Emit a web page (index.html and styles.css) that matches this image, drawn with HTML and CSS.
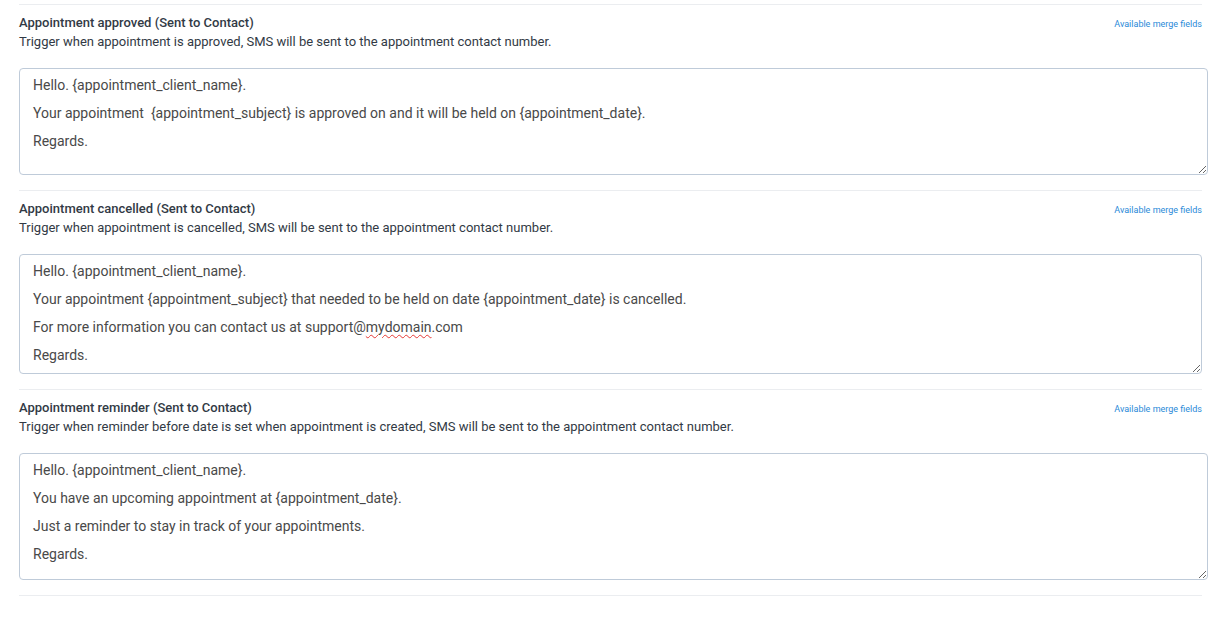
FILE: index.html
```html
<!DOCTYPE html>
<html lang="en">
<head>
    <meta charset="UTF-8">
    <meta name="viewport" content="width=device-width, initial-scale=1.0">
    <title>SMS Triggers</title>
    <link rel="stylesheet" href="styles.css">
</head>
<body>
    <div class="sms-triggers">
        <!-- appointment approved -->
        <hr class="divider">
        <div class="trigger-head">
            <div class="trigger-info">
                <div class="trigger-title">Appointment approved (Sent to Contact)</div>
                <div class="trigger-desc">Trigger when appointment is approved, SMS will be sent to the appointment contact number.</div>
            </div>
            <a class="merge-link" href="#">Available merge fields</a>
        </div>
        <div class="message-box box-approved">
            <p>Hello. {appointment_client_name}.</p>
            <p>Your appointment &nbsp;{appointment_subject} is approved on and it will be held on {appointment_date}.</p>
            <p>Regards.</p>
        </div>

        <!-- appointment cancelled -->
        <hr class="divider">
        <div class="trigger-head">
            <div class="trigger-info">
                <div class="trigger-title">Appointment cancelled (Sent to Contact)</div>
                <div class="trigger-desc">Trigger when appointment is cancelled, SMS will be sent to the appointment contact number.</div>
            </div>
            <a class="merge-link" href="#">Available merge fields</a>
        </div>
        <div class="message-box box-cancelled">
            <p>Hello. {appointment_client_name}.</p>
            <p>Your appointment {appointment_subject} that needed to be held on date {appointment_date} is cancelled.</p>
            <p>For more information you can contact us at support@<span class="misspelled">mydomain</span>.com</p>
            <p>Regards.</p>
        </div>

        <!-- appointment reminder -->
        <hr class="divider">
        <div class="trigger-head">
            <div class="trigger-info">
                <div class="trigger-title">Appointment reminder (Sent to Contact)</div>
                <div class="trigger-desc">Trigger when reminder before date is set when appointment is created, SMS will be sent to the appointment contact number.</div>
            </div>
            <a class="merge-link" href="#">Available merge fields</a>
        </div>
        <div class="message-box box-reminder">
            <p>Hello. {appointment_client_name}.</p>
            <p>You have an upcoming appointment at {appointment_date}.</p>
            <p>Just a reminder to stay in track of your appointments.</p>
            <p>Regards.</p>
        </div>
        <hr class="divider">
    </div>
</body>
</html>
```

FILE: styles.css
```css
body {
    margin: 0;
    font-family: Roboto, "Liberation Sans", Arial, sans-serif;
    background-color: #fff;
    color: #323a45;
}

.sms-triggers {
    width: 1183px;
    padding: 4px 0 0 19px;
}

/* 区切り線 */
.divider {
    border: none;
    border-top: 1px solid #ebedf0;
    margin: 0 0 9px 0;
}

.trigger-head {
    display: flex;
    justify-content: space-between;
    align-items: flex-start;
    margin-bottom: 17px;
}

.trigger-title {
    font-size: 13px;
    font-weight: 500;
    line-height: 18.5px;
    color: #323a45;
}

.trigger-desc {
    font-size: 13px;
    line-height: 18.5px;
    color: #323a45;
}

.merge-link {
    font-size: 9px;
    color: #2a8ad8;
    text-decoration: none;
    margin-top: 5px;
}

/* テキストエリア風のボックス */
.message-box {
    box-sizing: border-box;
    border: 1px solid #bfcbd9;
    border-radius: 4px;
    padding: 2px 13px;
    font-size: 14px;
    line-height: 28px;
    color: #494949;
    overflow: auto;
    resize: both;
    margin-bottom: 15px;
}

.message-box p {
    margin: 0;
}

.box-approved {
    width: 1189px;
    height: 107px;
}

.box-cancelled {
    width: 1183px;
    height: 120px;
}

.box-reminder {
    width: 1189px;
    height: 127px;
}

.misspelled {
    text-decoration: underline wavy #e53935;
    text-decoration-thickness: 1px;
    text-underline-offset: 2px;
}
```
